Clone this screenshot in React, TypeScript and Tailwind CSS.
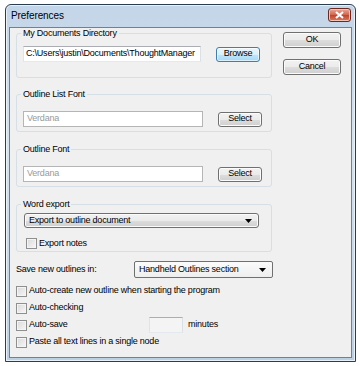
import React from "react";

const btnBase =
  "flex items-center rounded-[3px] border border-[#707070] bg-[linear-gradient(#f2f2f2_0%,#ebebeb_50%,#dddddd_51%,#cfcfcf_100%)] text-[#000] shadow-[inset_0_0_0_1px_#fbfbfb]";
const btn = `${btnBase} justify-center`;

const Checkbox = () => (
  <span className="box-border h-[11px] w-[11px] shrink-0 border border-[#8f8f8f] bg-[linear-gradient(135deg,#d9d9d9,#f7f7f7)] shadow-[inset_0_0_0_1px_#f4f4f4]" />
);

const Arrow = () => (
  <svg width="7" height="4" viewBox="0 0 7 4" className="shrink-0">
    <path d="M0 0h7L3.5 4z" fill="#000" />
  </svg>
);

const Group: React.FC<{ label: string; className?: string; children: React.ReactNode }> = ({ label, className, children }) => (
  <fieldset className={`rounded-[3px] border border-[#d5dfe5] ${className || ""}`}>
    <legend className="ml-[4px] px-[2px] leading-[11px]">{label}</legend>
    {children}
  </fieldset>
);

const FontRow: React.FC<{ w: string }> = ({ w }) => (
  <div className="mt-[11px] flex h-[16px] items-center pl-[6px]">
    <div className={`box-border flex h-[16px] ${w} items-center border border-[#b5b5b5] bg-white pl-[3px] text-[#9a9a9a]`}>
      Verdana
    </div>
    <button className={`${btn} ml-[15px] h-[15px] w-[44px]`}>Select</button>
  </div>
);

export default function App() {
  return (
    <div className="h-[366px] w-[360px] bg-white pl-[5px] pt-[4px] font-['Liberation_Sans',Arial,sans-serif] text-[9px] tracking-[-0.22px] text-black">
      <div className="box-border flex h-[358px] w-[351px] flex-col rounded-t-[6px] border border-[#2b3d50] bg-[linear-gradient(180deg,#c3d5e8,#d6e3f0_40%,#bcd0e5)] shadow-[inset_0_0_0_1px_#e8f0f8]">
        {/* title bar */}
        <div className="flex h-[22px] items-start justify-between pl-[5px] pr-[4px]">
          <span className="mt-[5px] text-[10px] leading-[12px] tracking-[-0.1px]">Preferences</span>
          <div className="mt-[3px] flex h-[14px] w-[23px] items-center justify-center rounded-[3px] border border-[#6b2a20] bg-[linear-gradient(#e9a99b,#d0634c_50%,#c0432a_51%,#d87b62)] shadow-[inset_0_0_0_1px_#f3c3b6]">
            <svg width="9" height="8" viewBox="0 0 9 8">
              <path d="M1 1l7 6M8 1L1 7" stroke="#fff" strokeWidth="2.2" />
            </svg>
          </div>
        </div>
        {/* client */}
        <div className="mx-[3px] mb-[3px] flex flex-1 flex-col border border-[#5d87aa] bg-[#f0f0f0]">
          <div className="flex">
            <div className="ml-[6px] flex w-[256px] flex-col">
              <Group label="My Documents Directory" className="pb-[15px]">
                <div className="mt-[7px] flex h-[16px] items-center pl-[6px]">
                  <div className="box-border flex h-[16px] w-[178px] items-center overflow-hidden whitespace-nowrap border border-[#abadb3] border-l-[#e2e3ea] border-r-[#dbdfe6] border-b-[#e3e9ef] bg-white pl-[2px]">
                    C:\Users\justin\Documents\ThoughtManager
                  </div>
                  <button className="ml-[15px] flex h-[15px] w-[44px] items-center justify-center rounded-[3px] border border-[#3c7fb1] bg-[linear-gradient(#eaf6fd_0%,#d9f0fc_50%,#bee6fd_51%,#a7d9f5_100%)] shadow-[inset_0_0_0_1px_#ffffff99]">
                    Browse
                  </button>
                </div>
              </Group>
              <Group label="Outline List Font" className="mt-[11px] pb-[4px]">
                <FontRow w="w-[180px]" />
              </Group>
              <Group label="Outline Font" className="mt-[12px] pb-[4px]">
                <FontRow w="w-[180px]" />
              </Group>
              <Group label="Word export" className="mt-[12px] pb-[2px]">
                <div className="mt-[3px] pl-[7px]">
                  <div className={`${btnBase} h-[15px] w-[235px] justify-between pl-[4px] pr-[6px]`}>
                    <span>Export to outline document</span>
                    <Arrow />
                  </div>
                </div>
                <div className="mt-[10px] flex h-[11px] items-center gap-[2px] pl-[9px]">
                  <Checkbox />
                  <span>Export notes</span>
                </div>
              </Group>
            </div>
            <div className="ml-[11px] mt-[4px] flex flex-col gap-[11px]">
              <button className={`${btn} h-[16px] w-[58px]`}>OK</button>
              <button className={`${btn} h-[16px] w-[58px]`}>Cancel</button>
            </div>
          </div>
          <div className="mt-[9px] flex h-[17px] items-center pl-[6px]">
            <span className="w-[118px]">Save new outlines in:</span>
            <div className="box-border flex h-[17px] w-[139px] items-center justify-between rounded-[2px] border border-[#707070] bg-[linear-gradient(#fbfbfb,#eeeeee)] pl-[4px] pr-[6px]">
              <span>Handheld Outlines section</span>
              <Arrow />
            </div>
          </div>
          <div className="mt-[5px] flex flex-col gap-[1px] pl-[6px]">
            <div className="flex h-[16px] items-center gap-[2px]">
              <Checkbox />
              <span>Auto-create new outline when starting the program</span>
            </div>
            <div className="flex h-[16px] items-center gap-[2px]">
              <Checkbox />
              <span>Auto-checking</span>
            </div>
            <div className="flex h-[16px] items-center">
              <Checkbox />
              <span className="ml-[2px] w-[120px]">Auto-save</span>
              <div className="box-border h-[16px] w-[34px] border border-[#abadb3] border-l-[#e2e3ea] border-r-[#dbdfe6] border-b-[#e3e9ef] bg-[#f4f4f4]" />
              <span className="ml-[5px]">minutes</span>
            </div>
            <div className="flex h-[16px] items-center gap-[2px]">
              <Checkbox />
              <span>Paste all text lines in a single node</span>
            </div>
          </div>
        </div>
      </div>
    </div>
  );
}
